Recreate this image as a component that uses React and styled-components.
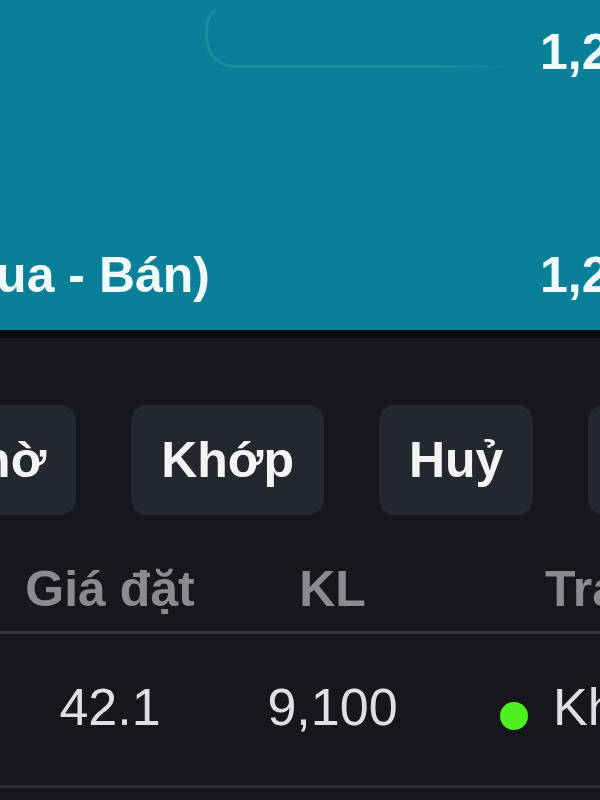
import React from 'react';
import styled, { createGlobalStyle } from 'styled-components';

const GlobalStyle = createGlobalStyle`
  html, body {
    margin: 0;
    padding: 0;
    background: #15171c;
    overflow: hidden;
  }
  body {
    font-family: "Liberation Sans", Arial, sans-serif;
  }
`;

const tabs = ['Chờ', 'Khớp', 'Huỷ', 'Tất cả'];

const App = () => {
  return (
    <Screen>
      <GlobalStyle />
      <SummaryPanel>
        <TopRow>
          <span />
          <GhostPill />
          <span />
          <Amount $top>1,245,600</Amount>
        </TopRow>
        <BottomRow>
          <Label>KL (Mua - Bán)</Label>
          <span />
          <Amount>1,245,600</Amount>
        </BottomRow>
      </SummaryPanel>

      <TabStrip>
        {tabs.map((t) => (
          <Tab key={t}>{t}</Tab>
        ))}
      </TabStrip>

      <HeaderRow>
        <HeadCell>Giá đặt</HeadCell>
        <HeadCell>KL</HeadCell>
        <HeadCell $left>Trạng thái</HeadCell>
      </HeaderRow>

      <OrderRow>
        <Cell>42.1</Cell>
        <Cell>9,100</Cell>
        <StatusCell>
          <Dot />
          <span>Khớp</span>
        </StatusCell>
      </OrderRow>
    </Screen>
  );
};

export default App;

// STYLED CSS

const Screen = styled.div`
  width: 600px;
  height: 800px;
  overflow: hidden;
  background: #15171c;
`;

const SummaryPanel = styled.div`
  height: 338px;
  box-sizing: border-box;
  background: #0a8098;
  border-bottom: 8px solid #080b0f;
  padding-bottom: 26px;
  display: flex;
  flex-direction: column;
  justify-content: space-between;
  overflow: hidden;
  color: #f1fbfd;
  font-weight: 700;
  font-size: 50px;
  white-space: nowrap;
`;

const TopRow = styled.div`
  display: grid;
  grid-template-columns: 205px 310px 25px max-content;
  align-items: start;
`;

const GhostPill = styled.div`
  height: 62px;
  border: 3px solid rgba(255, 255, 255, 0.08);
  border-top-color: transparent;
  border-right: none;
  border-radius: 30px 0 0 30px;
  -webkit-mask-image: linear-gradient(to right, #000 75%, transparent);
  mask-image: linear-gradient(to right, #000 75%, transparent);
`;

const Amount = styled.div`
  padding-top: ${(p) => (p.$top ? '23px' : '0')};
  line-height: 58px;
`;

const BottomRow = styled.div`
  display: grid;
  grid-template-columns: 210px 330px max-content;
  line-height: 58px;
`;

const Label = styled.div`
  display: flex;
  justify-content: flex-end;
`;

const TabStrip = styled.div`
  display: flex;
  gap: 55px;
  margin: 67px 0 0 -86px;
`;

const Tab = styled.div`
  flex-shrink: 0;
  height: 110px;
  padding: 0 30px;
  display: flex;
  align-items: center;
  background: #25272f;
  border-radius: 16px;
  color: #f4f4f6;
  font-size: 50px;
  font-weight: 700;
  white-space: nowrap;
`;

const HeaderRow = styled.div`
  display: grid;
  grid-template-columns: 220px 225px 1fr;
  margin-top: 45px;
  padding-bottom: 13px;
  border-bottom: 3px solid #33353b;
  line-height: 58px;
  font-size: 50px;
  font-weight: 700;
  color: #8a8b90;
  white-space: nowrap;
`;

const HeadCell = styled.div`
  text-align: ${(p) => (p.$left ? 'left' : 'center')};
  padding-left: ${(p) => (p.$left ? '100px' : '0')};
`;

const OrderRow = styled.div`
  display: grid;
  grid-template-columns: 220px 225px 1fr;
  align-items: center;
  height: 151px;
  border-bottom: 3px solid #2c2e34;
  font-size: 52px;
  color: #dfe0e3;
  white-space: nowrap;
`;

const Cell = styled.div`
  text-align: center;
  margin-top: -6px;
`;

const StatusCell = styled.div`
  display: flex;
  align-items: center;
  gap: 25px;
  padding-left: 55px;
  margin-top: -6px;
`;

const Dot = styled.span`
  flex-shrink: 0;
  width: 28px;
  height: 28px;
  border-radius: 50%;
  background: #4ef022;
  margin-top: 18px;
`;
